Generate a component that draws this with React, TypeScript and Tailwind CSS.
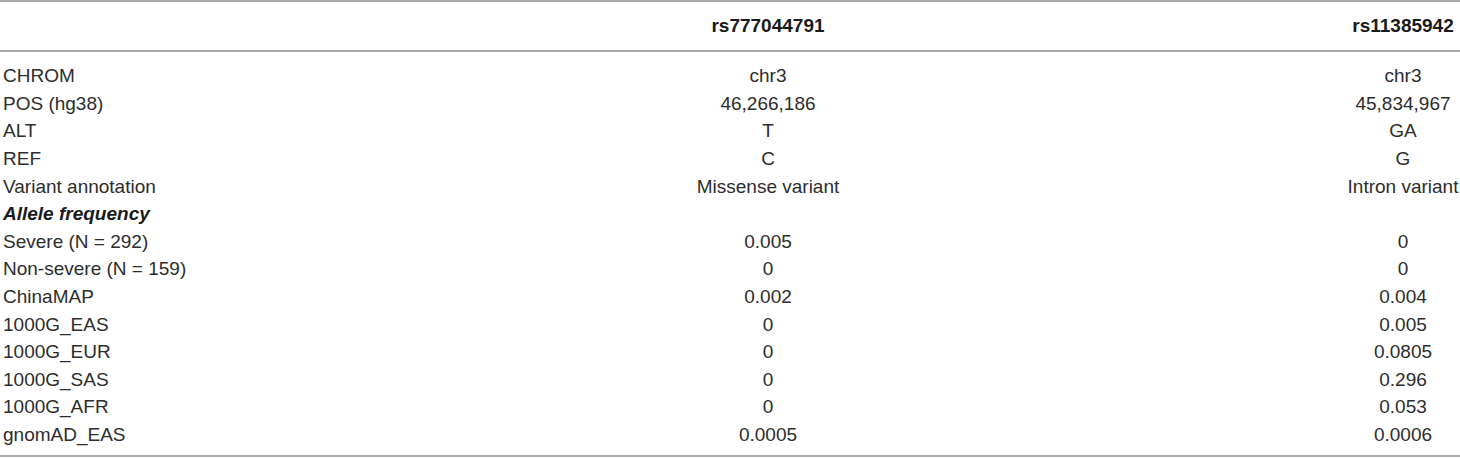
import React from "react";

const rows: { label: string; a: string; b: string; bold?: boolean }[] = [
  { label: "CHROM", a: "chr3", b: "chr3" },
  { label: "POS (hg38)", a: "46,266,186", b: "45,834,967" },
  { label: "ALT", a: "T", b: "GA" },
  { label: "REF", a: "C", b: "G" },
  { label: "Variant annotation", a: "Missense variant", b: "Intron variant" },
  { label: "Allele frequency", a: "", b: "", bold: true },
  { label: "Severe (N = 292)", a: "0.005", b: "0" },
  { label: "Non-severe (N = 159)", a: "0", b: "0" },
  { label: "ChinaMAP", a: "0.002", b: "0.004" },
  { label: "1000G_EAS", a: "0", b: "0.005" },
  { label: "1000G_EUR", a: "0", b: "0.0805" },
  { label: "1000G_SAS", a: "0", b: "0.296" },
  { label: "1000G_AFR", a: "0", b: "0.053" },
  { label: "gnomAD_EAS", a: "0.0005", b: "0.0006" },
];

export default function App() {
  return (
    <div
      className="w-[1460px] h-[458px] bg-white text-[#2d2d2d] text-[19px]"
      style={{ fontFamily: '"Liberation Sans", Arial, sans-serif' }}
    >
      <div className="border-t-2 border-b-2 border-[#ababab] h-[52px] flex items-center font-bold text-[#1a1a1a]">
        <div className="w-[536px] flex-none" />
        <div className="w-[464px] flex-none text-center">rs777044791</div>
        <div className="w-[346px] flex-none" />
        <div className="w-[114px] flex-none text-center">rs11385942</div>
      </div>
      <div className="pt-[10px] pb-[7px] border-b-2 border-[#ababab]">
        {rows.map((r) => (
          <div key={r.label} className="h-[27.6px] flex items-center leading-none">
            <div
              className={
                "w-[536px] flex-none pl-[3px] " +
                (r.bold ? "font-bold italic text-[#1a1a1a]" : "")
              }
            >
              {r.label}
            </div>
            <div className="w-[464px] flex-none text-center">{r.a}</div>
            <div className="w-[346px] flex-none" />
            <div className="w-[114px] flex-none text-center">{r.b}</div>
          </div>
        ))}
      </div>
    </div>
  );
}
